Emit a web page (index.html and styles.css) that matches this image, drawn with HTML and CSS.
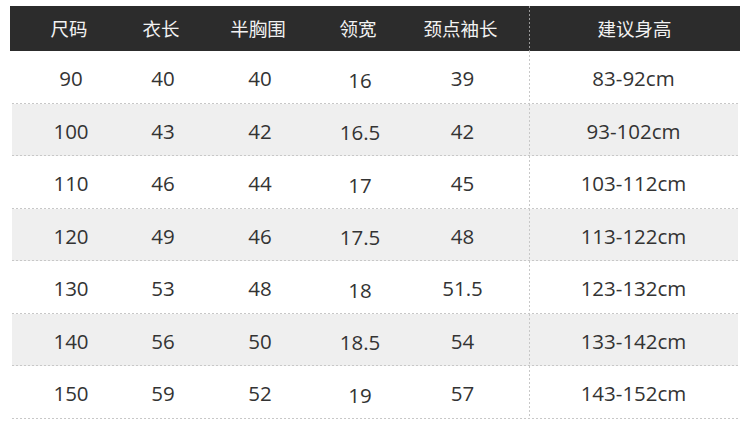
FILE: index.html
```html
<!DOCTYPE html>
<html lang="zh">
<head>
<meta charset="utf-8">
<title>尺码表</title>
<link rel="stylesheet" href="styles.css">
</head>
<body>
<div class="table">
  <div class="row head">
    <div class="cell">尺码</div>
    <div class="cell">衣长</div>
    <div class="cell">半胸围</div>
    <div class="cell">领宽</div>
    <div class="cell">颈点袖长</div>
    <div class="cell last">建议身高</div>
  </div>
  <div class="row">
    <div class="cell">90</div><div class="cell">40</div><div class="cell">40</div><div class="cell low">16</div><div class="cell">39</div><div class="cell last">83-92cm</div>
  </div>
  <div class="row alt">
    <div class="cell">100</div><div class="cell">43</div><div class="cell">42</div><div class="cell low">16.5</div><div class="cell">42</div><div class="cell last">93-102cm</div>
  </div>
  <div class="row">
    <div class="cell">110</div><div class="cell">46</div><div class="cell">44</div><div class="cell low">17</div><div class="cell">45</div><div class="cell last">103-112cm</div>
  </div>
  <div class="row alt">
    <div class="cell">120</div><div class="cell">49</div><div class="cell">46</div><div class="cell low">17.5</div><div class="cell">48</div><div class="cell last">113-122cm</div>
  </div>
  <div class="row">
    <div class="cell">130</div><div class="cell">53</div><div class="cell">48</div><div class="cell low">18</div><div class="cell">51.5</div><div class="cell last">123-132cm</div>
  </div>
  <div class="row alt">
    <div class="cell">140</div><div class="cell">56</div><div class="cell">50</div><div class="cell low">18.5</div><div class="cell">54</div><div class="cell last">133-142cm</div>
  </div>
  <div class="row">
    <div class="cell">150</div><div class="cell">59</div><div class="cell">52</div><div class="cell low">19</div><div class="cell">57</div><div class="cell last">143-152cm</div>
  </div>
</div>
</body>
</html>
```

FILE: styles.css
```css
html, body {
  margin: 0;
  padding: 0;
  background: #ffffff;
}

body {
  font-family: "Open Sans", "Noto Sans CJK SC", sans-serif;
  color: #333333;
}

.table {
  padding: 6px 10px 0 10px;
  display: flex;
  flex-direction: column;
}

.row {
  display: grid;
  grid-template-columns: 118px 66px 128px 72px 133px 1fr;
  height: 52.5px;
  margin: 0 2px;
  background-image: repeating-linear-gradient(to right, #c8c8c8 0 2px, transparent 2px 4px);
  background-size: 100% 1px;
  background-position: left bottom;
  background-repeat: no-repeat;
  font-size: 20.5px;
}

.row.alt {
  background-color: #efefef;
}

.row.head {
  height: 45px;
  margin: 0;
  background: #2c2c2c;
  color: #f2f2f2;
  font-family: "Noto Sans CJK SC", sans-serif;
  font-size: 18.5px;
}

.cell {
  display: flex;
  align-items: center;
  justify-content: center;
  padding-top: 2px;
}

.cell.low {
  padding-top: 5px;
}

.head .cell {
  padding-top: 0;
  padding-bottom: 1px;
}

.cell.last {
  background-image: repeating-linear-gradient(to bottom, #c8c8c8 0 2px, transparent 2px 4px);
  background-size: 1px 100%;
  background-position: left top;
  background-repeat: no-repeat;
}

.head .cell.last {
  background-image: repeating-linear-gradient(to bottom, #9a9a9a 0 2px, transparent 2px 4px);
  margin-left: 2px;
}
```
